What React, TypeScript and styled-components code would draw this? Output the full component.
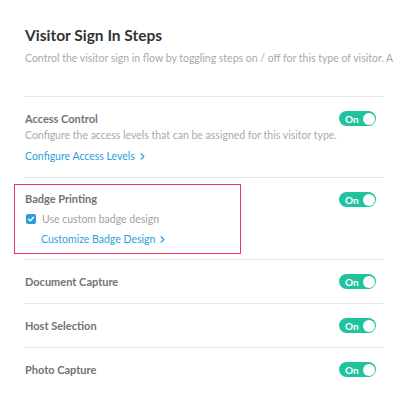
import styled, { createGlobalStyle } from "styled-components";
import { ChevronRight } from "lucide-react";

const GlobalStyle = createGlobalStyle`
  html, body {
    margin: 0;
    padding: 0;
    background: #ffffff;
    overflow: hidden;
  }
  body {
    font-family: Lato, "Open Sans", sans-serif;
  }
`;

const Page = styled.div`
  width: 400px;
  height: 400px;
  box-sizing: border-box;
  padding: 24px 17px 0 25px;
  overflow: hidden;
`;

const Title = styled.h1`
  margin: 0;
  font-size: 15.5px;
  line-height: 22px;
  font-weight: 700;
  color: #333333;
`;

const Subtitle = styled.p`
  margin: 5px 0 31px;
  font-size: 10.5px;
  line-height: 14px;
  color: #a9a9a9;
  white-space: nowrap;
  width: 420px;
`;

const List = styled.div`
  border-top: 1px solid #e6e6e6;
`;

const Row = styled.div`
  display: flex;
  justify-content: space-between;
  align-items: flex-start;
  border-bottom: 1px solid #e6e6e6;
  padding-right: 7px;

  &:last-child {
    border-bottom: none;
  }
`;

const Content = styled.div`
  padding: 15px 0 14px;
`;

const Highlight = styled.div`
  margin: 6px 0 5px -11px;
  width: 227px;
  box-sizing: border-box;
  border: 1px solid #e8336f;
  padding: 7px 10px;
`;

const Heading = styled.div`
  font-size: 11px;
  line-height: 14px;
  font-weight: 700;
  color: #737373;
`;

const Description = styled.div`
  margin-top: 2px;
  font-size: 10.5px;
  line-height: 14px;
  color: #a9a9a9;
  white-space: nowrap;
`;

const Link = styled.a<{ $indent?: boolean; $gap: number }>`
  display: flex;
  align-items: center;
  gap: 2px;
  margin-top: ${({ $gap }) => $gap}px;
  margin-left: ${({ $indent }) => ($indent ? "16px" : "0")};
  font-size: 10.5px;
  line-height: 14px;
  color: #2a9fdc;
  text-decoration: none;
  cursor: pointer;
`;

const CheckRow = styled.label`
  display: flex;
  align-items: center;
  gap: 6px;
  margin-top: 6px;
  font-size: 10.5px;
  line-height: 14px;
  color: #a0a0a0;
`;

const CheckBox = styled.span`
  display: flex;
  align-items: center;
  justify-content: center;
  width: 10px;
  height: 10px;
  margin-left: 1px;
  border-radius: 2px;
  background: #2a9fdc;
`;

const Toggle = styled.div`
  display: flex;
  align-items: center;
  justify-content: space-between;
  box-sizing: border-box;
  width: 37px;
  height: 15px;
  margin-top: 14px;
  padding: 0 1.5px 0 6px;
  border-radius: 8px;
  background: #1fc39f;
  color: #ffffff;
  font-size: 10px;
  font-weight: 700;
`;

const Knob = styled.span`
  width: 12px;
  height: 12px;
  border-radius: 50%;
  background: #ffffff;
`;

function OnToggle() {
  return (
    <Toggle>
      On
      <Knob />
    </Toggle>
  );
}

const simpleSteps = ["Document Capture", "Host Selection", "Photo Capture"];

export default function App() {
  return (
    <Page>
      <GlobalStyle />
      <Title>Visitor Sign In Steps</Title>
      <Subtitle>
        Control the visitor sign in flow by toggling steps on / off for this type of visitor. A
      </Subtitle>
      <List>
        <Row>
          <Content>
            <Heading>Access Control</Heading>
            <Description>
              Configure the access levels that can be assigned for this visitor type.
            </Description>
            <Link $gap={7}>
              Configure Access Levels
              <ChevronRight size={11} strokeWidth={2.5} />
            </Link>
          </Content>
          <OnToggle />
        </Row>
        <Row>
          <Highlight>
            <Heading>Badge Printing</Heading>
            <CheckRow>
              <CheckBox>
                <svg width="8" height="8" viewBox="0 0 8 8">
                  <path d="M1.5 4.2 L3.3 5.8 L6.5 2.3" fill="none" stroke="#fff" strokeWidth="1.4" strokeLinecap="round" strokeLinejoin="round" />
                </svg>
              </CheckBox>
              Use custom badge design
            </CheckRow>
            <Link $indent $gap={6}>
              Customize Badge Design
              <ChevronRight size={11} strokeWidth={2.5} />
            </Link>
          </Highlight>
          <OnToggle />
        </Row>
        {simpleSteps.map((step) => (
          <Row key={step}>
            <Content>
              <Heading>{step}</Heading>
            </Content>
            <OnToggle />
          </Row>
        ))}
      </List>
    </Page>
  );
}
